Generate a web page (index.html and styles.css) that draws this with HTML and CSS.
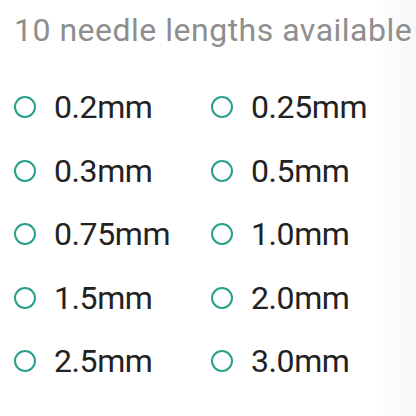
FILE: index.html
```html
<!DOCTYPE html>
<html lang="en">
<head>
<meta charset="utf-8">
<link rel="stylesheet" href="styles.css">
</head>
<body>
<div class="page">
  <p class="lead">10 needle lengths available</p>
  <ul class="options">
    <li class="option"><span class="dot"></span><span class="label">0.2mm</span></li>
    <li class="option"><span class="dot"></span><span class="label">0.25mm</span></li>
    <li class="option"><span class="dot"></span><span class="label">0.3mm</span></li>
    <li class="option"><span class="dot"></span><span class="label">0.5mm</span></li>
    <li class="option"><span class="dot"></span><span class="label">0.75mm</span></li>
    <li class="option"><span class="dot"></span><span class="label">1.0mm</span></li>
    <li class="option"><span class="dot"></span><span class="label">1.5mm</span></li>
    <li class="option"><span class="dot"></span><span class="label">2.0mm</span></li>
    <li class="option"><span class="dot"></span><span class="label">2.5mm</span></li>
    <li class="option"><span class="dot"></span><span class="label">3.0mm</span></li>
  </ul>
</div>
</body>
</html>
```
FILE: styles.css
```css
html, body {
  margin: 0;
  padding: 0;
}

body {
  width: 416px;
  height: 416px;
  overflow: hidden;
  background: linear-gradient(90deg, #ffffff 0%, #ffffff 90%, #f7f7f7 100%);
  font-family: Roboto, "Noto Sans", sans-serif;
}

.page {
  padding: 10px 0 0 14px;
}

.lead {
  margin: 0;
  font-size: 32px;
  line-height: 40px;
  color: #8e8e8e;
  letter-spacing: 0.5px;
  white-space: nowrap;
}

.options {
  list-style: none;
  margin: 36px 0 0 0;
  padding: 0;
  display: grid;
  grid-template-columns: 197px 197px;
  row-gap: 21.5px;
}

.option {
  display: flex;
  align-items: center;
  gap: 18px;
  height: 42px;
}

.dot {
  box-sizing: border-box;
  width: 22px;
  height: 22px;
  border: 2.6px solid #28a08b;
  border-radius: 50%;
  flex: none;
}

.label {
  font-size: 32px;
  color: #222222;
  letter-spacing: -0.4px;
  white-space: nowrap;
}
```
